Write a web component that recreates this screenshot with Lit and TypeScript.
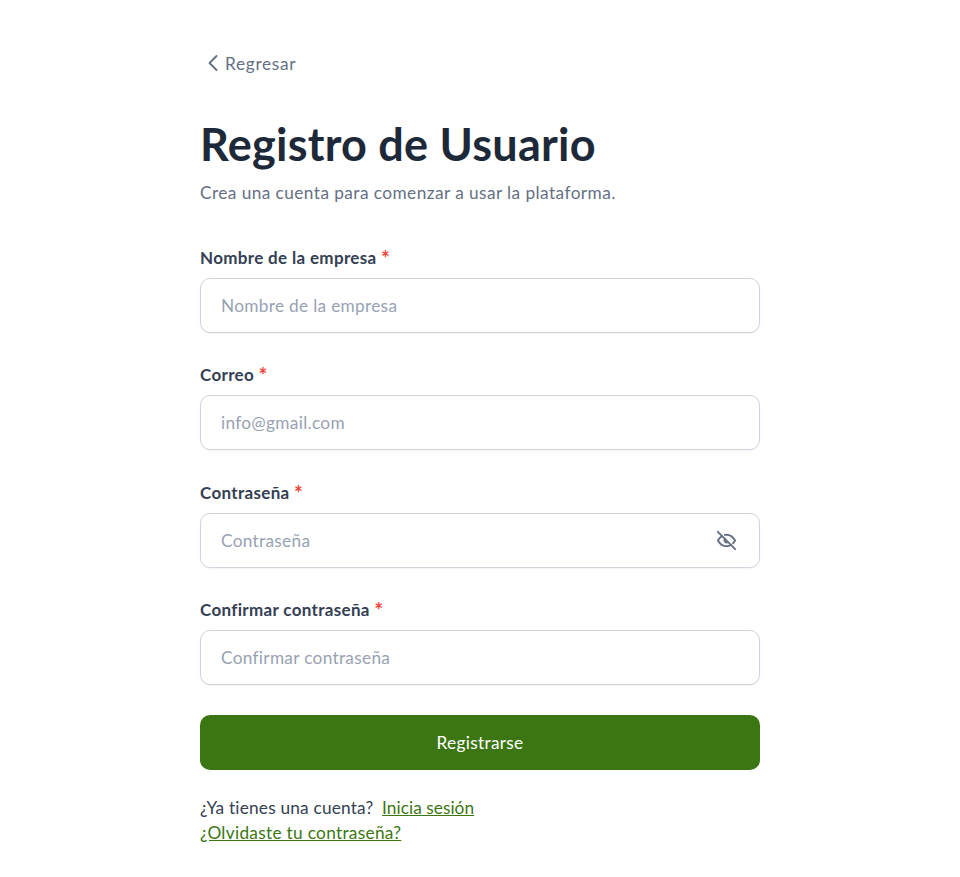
import { LitElement, html, css, nothing } from "lit";
import { customElement } from "lit/decorators.js";

const fields = [
  { label: "Nombre de la empresa", ph: "Nombre de la empresa" },
  { label: "Correo", ph: "info@gmail.com" },
  { label: "Contraseña", ph: "Contraseña", eye: true },
  { label: "Confirmar contraseña", ph: "Confirmar contraseña" },
];

@customElement("app-root")
export class AppRoot extends LitElement {
  static styles = css`
    :host { display: block; background: #fff; min-height: 877px; font-family: Lato, "Noto Sans", sans-serif; }
    .wrap { width: 560px; margin: 0 auto; padding-top: 52px; display: flex; flex-direction: column; }
    .back { display: flex; align-items: center; gap: 3px; height: 22px; color: #667085; font-size: 17.25px; letter-spacing: 0.7px; padding-left: 4px; }
    .back svg { width: 18px; height: 18px; flex: none; }
    h1 { margin: 42px 0 0; font-size: 45px; line-height: 56px; font-weight: 700; color: #1d2939; letter-spacing: 0.25px; }
    .sub { margin: 9px 0 0; font-size: 17.25px; line-height: 24px; color: #667085; letter-spacing: 0.43px; }
    form { margin-top: 40.75px; display: flex; flex-direction: column; }
    .field { display: flex; flex-direction: column; gap: 8px; margin-bottom: 30.5px; }
    label { font-size: 17px; line-height: 24px; height: 24px; font-weight: 700; color: #344054; letter-spacing: 0.33px; }
    .req { color: #f04438; font-size: 21px; line-height: 1; vertical-align: -2px; }
    .box { height: 55px; box-sizing: border-box; border: 1px solid #d0d5dd; border-radius: 10px; display: flex; align-items: center; justify-content: space-between; padding: 0 21px 0 20px; box-shadow: 0 1px 2px rgba(16,24,40,.05); }
    .box input { flex: 1; min-width: 0; border: 0; outline: 0; padding: 0; background: none; font: inherit; font-size: 17.25px; color: #344054; letter-spacing: 0.3px; }
    .box input::placeholder { color: #98a2b3; opacity: 1; }
    .box svg { width: 23px; height: 23px; flex: none; }
    button { height: 55px; margin-top: -1px; border: 0; border-radius: 10px; background: #3c7613; color: #fff; font: inherit; font-size: 17.25px; letter-spacing: 0.3px; }
    .foot { margin-top: 25px; font-size: 17.25px; line-height: 25px; color: #344054; letter-spacing: 0.2px; }
    .foot a { color: #3c7613; text-decoration: underline; letter-spacing: 0.3px; }
    .foot a.gap { margin-left: 4px; letter-spacing: 0.05px; }
  `;

  render() {
    return html`<div class="wrap">
      <div class="back">
        <svg viewBox="0 0 18 18" fill="none" stroke="#667085" stroke-width="1.9" stroke-linecap="round" stroke-linejoin="round"><path d="M12.500 2 L5.500 9 L12.500 16"/></svg>
        <span>Regresar</span>
      </div>
      <h1>Registro de Usuario</h1>
      <p class="sub">Crea una cuenta para comenzar a usar la plataforma.</p>
      <form @submit=${(e: Event) => e.preventDefault()}>
        ${fields.map((f) => html`<div class="field">
          <label>${f.label} <span class="req">*</span></label>
          <div class="box">
            <input placeholder=${f.ph} />
            ${f.eye
              ? html`<svg viewBox="0 0 24 24" fill="none" stroke="#667085" stroke-width="2" stroke-linecap="round" stroke-linejoin="round"><path d="M10.585 10.587a2 2 0 0 0 2.829 2.828"/><path d="M16.681 16.673a8.717 8.717 0 0 1-4.681 1.327c-3.6 0-6.600-2-9-6c1.272-2.120 2.712-3.678 4.320-4.674m2.860-1.146a9.055 9.055 0 0 1 1.820-.180c3.600 0 6.600 2 9 6c-.666 1.110-1.379 2.067-2.138 2.870"/><path d="M3 3l18 18"/></svg>`
              : nothing}
          </div>
        </div>`)}
        <button type="button">Registrarse</button>
      </form>
      <div class="foot">
        <div>¿Ya tienes una cuenta? <a class="gap" href="#">Inicia sesión</a></div>
        <div><a href="#">¿Olvidaste tu contraseña?</a></div>
      </div>
    </div>`;
  }
}
